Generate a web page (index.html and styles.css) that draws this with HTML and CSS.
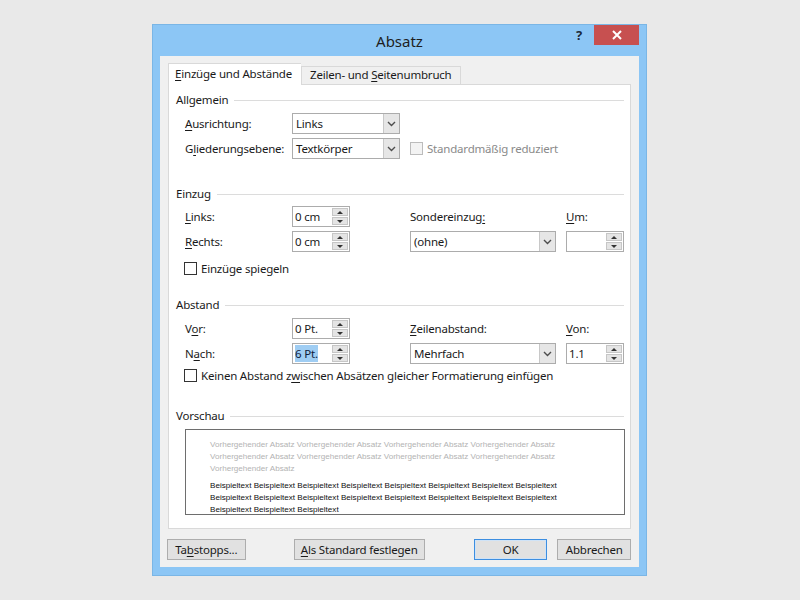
FILE: index.html
```html
<!DOCTYPE html>
<html lang="de">
<head>
<meta charset="utf-8">
<title>Absatz</title>
<link rel="stylesheet" href="styles.css">
</head>
<body>
<div class="window">
  <div class="titlebar">
    <div></div>
    <div class="title">Absatz</div>
    <div class="controls">
      <div class="help">?</div>
      <div class="close"><svg width="10" height="10" viewBox="0 0 10 10"><path d="M1 1 L9 9 M9 1 L1 9" stroke="#fff" stroke-width="2"/></svg></div>
    </div>
  </div>
  <div class="client">
    <div class="tabs">
      <div class="tab active"><u>E</u>inzüge und Abstände</div>
      <div class="tab">Zeilen- und <u>S</u>eitenumbruch</div>
    </div>
    <div class="panel">
      <div class="group-title">Allgemein</div>
      <div class="grid g1">
        <div class="label"><u>A</u>usrichtung:</div>
        <div class="select w108"><span class="val">Links</span><span class="arrow"><svg width="9" height="6" viewBox="0 0 9 6"><path d="M1 1 L4.5 4.5 L8 1" fill="none" stroke="#4d4d4d" stroke-width="1.4"/></svg></span></div>
        <div></div><div></div>
        <div class="label">G<u>l</u>iederungsebene:</div>
        <div class="select w108"><span class="val">Textkörper</span><span class="arrow"><svg width="9" height="6" viewBox="0 0 9 6"><path d="M1 1 L4.5 4.5 L8 1" fill="none" stroke="#4d4d4d" stroke-width="1.4"/></svg></span></div>
        <div class="check disabled span2"><span class="box"></span><span>Standardmäßig reduziert</span></div>
      </div>

      <div class="group-title gt2">Einzug</div>
      <div class="grid g2">
        <div class="label"><u>L</u>inks:</div>
        <div class="spin"><span class="val">0 cm</span><span class="spinbtn"><span class="up"></span><span class="down"></span></span></div>
        <div class="label">Sondereinzug<u>:</u></div>
        <div class="label"><u>U</u>m:</div>
        <div class="label"><u>R</u>echts:</div>
        <div class="spin"><span class="val">0 cm</span><span class="spinbtn"><span class="up"></span><span class="down"></span></span></div>
        <div class="select w146"><span class="val">(ohne)</span><span class="arrow"><svg width="9" height="6" viewBox="0 0 9 6"><path d="M1 1 L4.5 4.5 L8 1" fill="none" stroke="#4d4d4d" stroke-width="1.4"/></svg></span></div>
        <div class="spin"><span class="val"></span><span class="spinbtn"><span class="up"></span><span class="down"></span></span></div>
      </div>
      <div class="check row-check c1"><span class="box"></span><span>Einzüge spie<u>g</u>eln</span></div>

      <div class="group-title gt3">Abstand</div>
      <div class="grid g3">
        <div class="label">V<u>o</u>r:</div>
        <div class="spin"><span class="val">0 Pt.</span><span class="spinbtn"><span class="up"></span><span class="down"></span></span></div>
        <div class="label"><u>Z</u>eilenabstand:</div>
        <div class="label"><u>V</u>on:</div>
        <div class="label">N<u>a</u>ch:</div>
        <div class="spin"><span class="val"><span class="sel">6 Pt.</span></span><span class="spinbtn"><span class="up"></span><span class="down"></span></span></div>
        <div class="select w146"><span class="val">Mehrfach</span><span class="arrow"><svg width="9" height="6" viewBox="0 0 9 6"><path d="M1 1 L4.5 4.5 L8 1" fill="none" stroke="#4d4d4d" stroke-width="1.4"/></svg></span></div>
        <div class="spin"><span class="val">1.1</span><span class="spinbtn"><span class="up"></span><span class="down"></span></span></div>
      </div>
      <div class="check row-check c2"><span class="box"></span><span>Keinen Abstand z<u>w</u>ischen Absätzen gleicher Formatierung einfügen</span></div>

      <div class="group-title gt4">Vorschau</div>
      <div class="preview">
        <div class="prev">
          <div>Vorhergehender Absatz Vorhergehender Absatz Vorhergehender Absatz Vorhergehender Absatz</div>
          <div>Vorhergehender Absatz Vorhergehender Absatz Vorhergehender Absatz Vorhergehender Absatz</div>
          <div>Vorhergehender Absatz</div>
        </div>
        <div class="sample">
          <div>Beispieltext Beispieltext Beispieltext Beispieltext Beispieltext Beispieltext Beispieltext Beispieltext</div>
          <div>Beispieltext Beispieltext Beispieltext Beispieltext Beispieltext Beispieltext Beispieltext Beispieltext</div>
          <div>Beispieltext Beispieltext Beispieltext</div>
        </div>
      </div>
    </div>
    <div class="buttons">
      <div class="btn b-tab">Ta<u>b</u>stopps...</div>
      <div class="btn b-std"><u>A</u>ls Standard festlegen</div>
      <div class="btn b-ok">OK</div>
      <div class="btn b-cancel">Abbrechen</div>
    </div>
  </div>
</div>
</body>
</html>
```

FILE: styles.css
```css
* { box-sizing: border-box; }
html, body { margin: 0; padding: 0; }
body {
  background: #e9e9e9;
  width: 800px;
  height: 600px;
  font-family: "Noto Sans", "DejaVu Sans", sans-serif;
  font-size: 11.5px;
  letter-spacing: -0.2px;
  color: #1a1a1a;
  overflow: hidden;
}
u { text-decoration: underline; text-underline-offset: 2px; }

.window {
  margin: 24px 0 0 152px;
  width: 495px;
  height: 552px;
  background: #8cc6f5;
  border: 1px solid #7ab6e6;
  padding: 0 7px 8px 7px;
  display: flex;
  flex-direction: column;
}
.titlebar {
  height: 31px;
  display: grid;
  grid-template-columns: 1fr auto 1fr;
  align-items: start;
}
.title {
  font-size: 15px;
  letter-spacing: 0;
  color: #1e1e1e;
  line-height: 30px;
  padding-top: 1px;
}
.controls {
  display: flex;
  justify-content: flex-end;
  align-items: flex-start;
}
.help {
  font-weight: bold;
  font-size: 13px;
  color: #1c2a3a;
  width: 30px;
  text-align: center;
  line-height: 20px;
}
.close {
  width: 45px;
  height: 20px;
  background: #c75050;
  display: flex;
  align-items: center;
  justify-content: center;
}

.client {
  flex: 1;
  background: #f0f0f0;
  padding: 7px 8px 0 8px;
  display: flex;
  flex-direction: column;
}
.tabs {
  display: flex;
  align-items: flex-end;
  height: 21px;
  position: relative;
  z-index: 1;
}
.tab {
  height: 18px;
  line-height: 16px;
  padding: 0 8px;
  border: 1px solid #d9d9d9;
  border-bottom: none;
  background: #f0f0f0;
  color: #1a1a1a;
  white-space: nowrap;
}
.tab.active {
  height: 22px;
  line-height: 20px;
  padding: 0 9px 0 6px;
  background: #fff;
  margin-bottom: -1px;
  border-right: none;
}
.panel {
  height: 445px;
  background: #fff;
  border: 1px solid #d9d9d9;
  padding: 7px 6px 0 7px;
}
.group-title {
  display: flex;
  align-items: center;
  height: 16px;
  line-height: 16px;
  white-space: nowrap;
}
.group-title::after {
  content: "";
  flex: 1;
  border-top: 1px solid #dcdcdc;
  margin-left: 6px;
}
.gt2 { margin-top: 27px; }
.gt3 { margin-top: 21px; }
.gt4 { margin-top: 25px; }

.grid {
  display: grid;
  grid-template-columns: 107px 118px 156px 58px;
  grid-auto-rows: 21px;
  row-gap: 4px;
  margin-left: 9px;
  align-items: center;
}
.g1 { margin-top: 5px; }
.g2 { margin-top: 4px; }
.g3 { margin-top: 5px; }
.span2 { grid-column: span 2; }
.label { white-space: nowrap; }

.select, .spin {
  height: 21px;
  border: 1px solid #acacac;
  background: #fff;
  display: flex;
  align-items: stretch;
}
.w108 { width: 108px; }
.w146 { width: 146px; }
.spin { width: 58px; }
.select .val, .spin .val {
  flex: 1;
  padding-left: 2px;
  line-height: 19px;
  white-space: nowrap;
  overflow: hidden;
}
.select .val { padding-left: 3px; }
.arrow {
  width: 16px;
  background: #e6e6e6;
  border-left: 1px solid #c8c8c8;
  display: flex;
  align-items: center;
  justify-content: center;
}
.spinbtn {
  width: 16px;
  margin: 1px 1px 1px 0;
  display: flex;
  flex-direction: column;
  gap: 1px;
}
.spinbtn .up, .spinbtn .down {
  flex: 1;
  background: #e4e4e4;
  border: 1px solid #c6c6c6;
  position: relative;
}
.spinbtn .up::after, .spinbtn .down::after {
  content: "";
  position: absolute;
  left: 4px;
  width: 0;
  height: 0;
  border-left: 3px solid transparent;
  border-right: 3px solid transparent;
}
.spinbtn .up::after { top: 2px; border-bottom: 3px solid #333; }
.spinbtn .down::after { top: 2px; border-top: 3px solid #333; }
.sel {
  background: #9fcdf3;
  color: #10203a;
  padding: 1px 0;
}

.check {
  display: flex;
  align-items: center;
  gap: 4px;
  height: 16px;
  white-space: nowrap;
}
.check .box {
  width: 13px;
  height: 13px;
  border: 1px solid #333;
  background: #fff;
  flex: none;
}
.check.disabled { color: #8a8a8a; }
.check.disabled .box { border-color: #bcbcbc; background: #f3f3f3; }
.row-check { margin-left: 8px; }
.c1 { margin-top: 8px; }
.c2 { margin-top: 3px; }

.preview {
  margin: 5px 0 0 9px;
  width: 440px;
  height: 86px;
  border: 1px solid #6e6e6e;
  background: #fff;
  padding: 9px 0 0 24px;
  font-family: "Liberation Sans", Arial, sans-serif;
  font-size: 8.1px;
  letter-spacing: 0;
  line-height: 12px;
  white-space: nowrap;
}
.prev { color: #b3b3b3; }
.sample { color: #111; margin-top: 5px; }

.buttons {
  display: flex;
  margin: 10px 0 0 -1px;
}
.btn {
  height: 21px;
  line-height: 19px;
  border: 1px solid #adadad;
  background: #e1e1e1;
  text-align: center;
  white-space: nowrap;
}
.b-tab { width: 79px; }
.b-std { width: 132px; margin-left: 48px; }
.b-ok { width: 74px; margin-left: 49px; border-color: #3d8ee0; box-shadow: inset 0 0 0 1px #cfe3f7; }
.b-cancel { width: 74px; margin-left: 10px; }
```
